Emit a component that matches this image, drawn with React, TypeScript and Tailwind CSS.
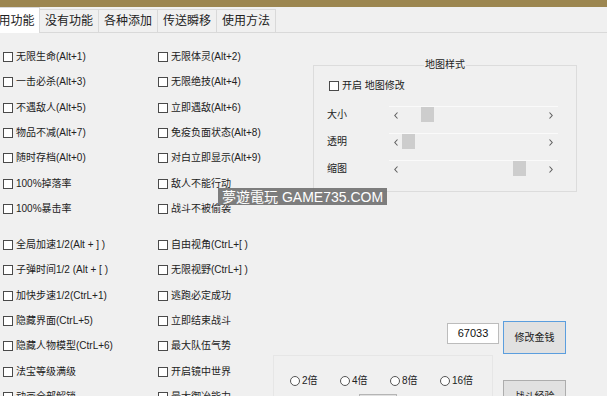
import React from "react";

const font = { fontFamily: '"Liberation Sans", "Noto Sans CJK SC", sans-serif' };

function Check({ label }: { label: string }) {
  return (
    <div className="flex h-[25.33px] items-center gap-[3px]">
      <div className="h-[10px] w-[10px] shrink-0 border border-[#4a4a4a] bg-white" />
      <span className="whitespace-nowrap text-[10px] leading-none text-[#222]">{label}</span>
    </div>
  );
}

function Radio({ label }: { label: string }) {
  return (
    <div className="flex w-[50px] shrink-0 items-center gap-[2px]">
      <div className="h-[10px] w-[10px] rounded-full border border-[#555] bg-white" />
      <span className="text-[10px] leading-none text-[#222]">{label}</span>
    </div>
  );
}

function Chev({ dir }: { dir: "l" | "r" }) {
  return (
    <svg width="4" height="7" viewBox="0 0 4 7">
      <path
        d={dir === "l" ? "M3.5 0.5 L0.8 3.5 L3.5 6.5" : "M0.5 0.5 L3.2 3.5 L0.5 6.5"}
        fill="none"
        stroke="#606060"
        strokeWidth="1.1"
      />
    </svg>
  );
}

function ScrollBar({ thumb }: { thumb: string }) {
  return (
    <div className="relative flex h-[17px] w-[169px] items-center justify-between border-t border-[#fafafa] px-[5px]">
      <Chev dir="l" />
      <div className={`absolute top-0 h-[15px] w-[13px] bg-[#cdcdcd] ${thumb}`} />
      <Chev dir="r" />
    </div>
  );
}

const group1: [string, string][] = [
  ["无限生命(Alt+1)", "无限体灵(Alt+2)"],
  ["一击必杀(Alt+3)", "无限绝技(Alt+4)"],
  ["不遇敌人(Alt+5)", "立即遇敌(Alt+6)"],
  ["物品不减(Alt+7)", "免疫负面状态(Alt+8)"],
  ["随时存档(Alt+0)", "对白立即显示(Alt+9)"],
  ["100%掉落率", "敌人不能行动"],
  ["100%暴击率", "战斗不被偷袭"],
];

const group2: [string, string][] = [
  ["全局加速1/2(Alt + ] )", "自由视角(CtrL+[ )"],
  ["子弹时间1/2 (Alt + [ )", "无限视野(CtrL+] )"],
  ["加快步速1/2(CtrL+1)", "逃跑必定成功"],
  ["隐藏界面(CtrL+5)", "立即结束战斗"],
  ["隐藏人物模型(CtrL+6)", "最大队伍气势"],
  ["法宝等级满级", "开启镜中世界"],
  ["动画全部解锁", "最大御冶能力"],
];

function Grid({ rows }: { rows: [string, string][] }) {
  return (
    <div className="grid grid-cols-[155px_1fr]">
      {rows.map(([a, b]) => (
        <React.Fragment key={a}>
          <Check label={a} />
          <Check label={b} />
        </React.Fragment>
      ))}
    </div>
  );
}

export default function App() {
  return (
    <div className="relative h-[396px] w-[607px] overflow-hidden bg-[#f0f0f0]" style={font}>
      <div className="h-[7px] bg-[#9c8650]" />
      <div className="flex h-[26px] items-end border-b border-[#d9d9d9]">
        <div className="-mb-px ml-[-19px] flex h-[26px] w-[59px] items-center justify-center border border-b-0 border-[#d9d9d9] bg-white text-[12px] text-[#222]">
          常用功能
        </div>
        {["没有功能", "各种添加", "传送瞬移", "使用方法"].map((t) => (
          <div
            key={t}
            className="flex h-[23px] w-[59px] items-center justify-center border border-b-0 border-l-0 border-[#d9d9d9] text-[12px] text-[#222]"
          >
            {t}
          </div>
        ))}
      </div>

      <div className="flex h-[363px]">
        <div className="w-[273px] shrink-0 pl-[3px] pt-[11.5px]">
          <Grid rows={group1} />
          <div className="mt-[10.5px]">
            <Grid rows={group2} />
          </div>
        </div>

        <div className="flex flex-1 flex-col">
          <div className="relative ml-[40px] mt-[32px] h-[127px] w-[264px] shrink-0 border border-[#dcdcdc] pl-[15px] pt-[14px]">
            <div className="absolute left-1/2 top-[-6px] -translate-x-1/2 bg-[#f0f0f0] px-[1px] text-[10px] leading-none text-[#222]">
              地图样式
            </div>
            <div className="flex h-[12px] items-center gap-[3px]">
              <div className="h-[10px] w-[10px] border border-[#4a4a4a] bg-white" />
              <span className="text-[10px] leading-none text-[#222]">开启 地图修改</span>
            </div>
            <div className="mt-[14px] flex flex-col gap-[10px]">
              {[
                ["大小", "left-[32px]"],
                ["透明", "left-[13px]"],
                ["缩图", "left-[124px]"],
              ].map(([l, t]) => (
                <div key={l} className="-ml-[2px] flex items-center">
                  <span className="w-[62px] text-[10px] leading-none text-[#222]">{l}</span>
                  <ScrollBar thumb={t} />
                </div>
              ))}
            </div>
          </div>

          <div className="mt-[129px] flex shrink-0 justify-end gap-[4px] pr-[41px]">
            <div className="mt-[2px] flex h-[21px] w-[52px] items-center justify-center border border-[#bcbcbc] bg-white text-[11px] text-[#111]">
              67033
            </div>
            <div className="flex h-[33px] w-[63px] items-center justify-center border border-[#5b9ede] bg-[#e1e1e1] text-[10px] text-[#222]">
              修改金钱
            </div>
          </div>

          <div className="mt-[1px] flex shrink-0">
            <div className="h-[60px] w-[220px] shrink-0 border border-b-0 border-[#e6e6e6] pl-[16px] pt-[19px]">
              <div className="flex h-[12px] items-center">
                <Radio label="2倍" />
                <Radio label="4倍" />
                <Radio label="8倍" />
                <Radio label="16倍" />
              </div>
              <div className="ml-[69px] mt-[7px] h-[20px] w-[38px] border border-[#b5b5b5] bg-[#e1e1e1]" />
            </div>
            <div className="ml-[10px] mt-[25px] flex h-[33px] w-[63px] shrink-0 items-center justify-center border border-[#adadad] bg-[#e1e1e1] text-[10px] text-[#222]">
              战斗经验
            </div>
          </div>
        </div>
      </div>

      <div className="absolute left-[218px] top-[188px] flex h-[17px] w-[169px] items-center justify-center gap-[4px] bg-[rgba(105,105,105,0.85)] text-[14px] leading-none text-white">
        <span>夢遊電玩</span>
        <span>GAME735.COM</span>
      </div>
    </div>
  );
}
